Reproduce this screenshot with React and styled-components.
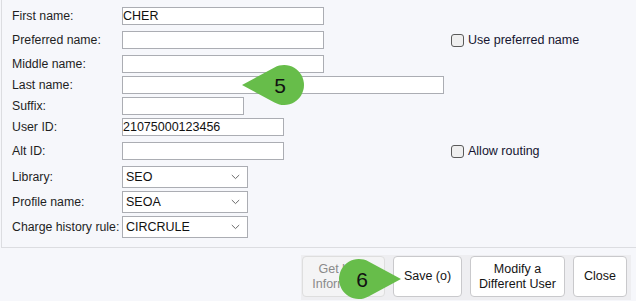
import React from "react";
import styled, { createGlobalStyle } from "styled-components";

const Global = createGlobalStyle`
  html, body { margin: 0; padding: 0; }
  body {
    background: #f6f7fb;
    font-family: "Liberation Sans", Arial, sans-serif;
    color: #1c1c1c;
  }
`;

const Page = styled.div`
  position: relative;
  width: 636px;
  height: 301px;
  overflow: hidden;
  background: #f6f7fb;
`;

const Panel = styled.div`
  margin-left: 1px;
  border-left: 1px solid #dcdde1;
  border-bottom: 1px solid #dcdde1;
  padding: 7px 0 9px 10px;
`;

const Row = styled.div`
  display: grid;
  grid-template-columns: 110px 329px auto;
  align-items: center;
  margin-top: ${(p) => p.$gap || 0}px;
`;

const Label = styled.label`
  font-size: 12.3px;
  color: #1f1f1f;
  white-space: nowrap;
`;

const TextBox = styled.div`
  box-sizing: border-box;
  width: ${(p) => p.$w}px;
  height: 18px;
  border: 1px solid #abadb3;
  background: #fff;
  font-size: 12.5px;
  line-height: 16px;
  padding-left: 0px;
  color: #111;
`;

const SelectBox = styled.div`
  box-sizing: border-box;
  width: 126px;
  height: 22px;
  border: 1px solid #abadb3;
  background: #fff;
  font-size: 12.5px;
  color: #111;
  display: flex;
  align-items: center;
  justify-content: space-between;
  padding: 0 7px 0 3px;
`;

const Check = styled.div`
  display: flex;
  align-items: center;
  gap: 4px;
  font-size: 12.5px;
  color: #151530;
  white-space: nowrap;
`;

const Box = styled.span`
  box-sizing: border-box;
  width: 13px;
  height: 13px;
  border: 1px solid #5a5a5a;
  border-radius: 3px;
  background: #efefef;
`;

const Footer = styled.div`
  display: flex;
  justify-content: flex-end;
  margin-top: 7px;
  padding-right: 5px;
`;

const ButtonBand = styled.div`
  display: flex;
  gap: 8px;
  padding: 1px 4px 3px 1px;
  background: #eeeef1;
`;

const Button = styled.div`
  box-sizing: border-box;
  width: ${(p) => p.$w}px;
  height: 41px;
  border: 1px solid ${(p) => (p.$disabled ? "#dedede" : "#c9c9cc")};
  border-radius: 4px;
  background: ${(p) => (p.$disabled ? "#f4f4f5" : "#ffffff")};
  color: ${(p) => (p.$disabled ? "#8a8a8a" : "#141414")};
  font-size: 12.5px;
  line-height: 15px;
  display: flex;
  align-items: center;
  justify-content: center;
  text-align: center;
`;

const CalloutSvg = styled.svg`
  position: absolute;
  left: ${(p) => p.$x}px;
  top: ${(p) => p.$y}px;
  overflow: visible;
`;

const Chevron = () => (
  <svg width="9" height="6" viewBox="0 0 9 6">
    <path d="M0.8 1 L4.5 4.6 L8.2 1" fill="none" stroke="#6b6b6b" strokeWidth="1" />
  </svg>
);

const GREEN = "#67bd4a";

function Callout({ x, y, dir, label, textDx }) {
  // teardrop: circle radius 20, tip 42 from center
  const r = 20;
  const d = 42;
  const cosA = r / d;
  const sinA = Math.sqrt(1 - cosA * cosA);
  const px = r * cosA;
  const py = r * sinA;
  let path;
  let w = d + r;
  let cx;
  if (dir === "left") {
    cx = d;
    path = `M0 ${r} L${cx - px} ${r - py} A${r} ${r} 0 1 1 ${cx - px} ${r + py} Z`;
  } else {
    cx = r;
    path = `M${w} ${r} L${cx + px} ${r - py} A${r} ${r} 0 1 0 ${cx + px} ${r + py} Z`;
  }
  return (
    <CalloutSvg $x={x} $y={y} width={w} height={2 * r} viewBox={`0 0 ${w} ${2 * r}`}>
      <path d={path} fill={GREEN} />
      <text
        x={cx + textDx}
        y={r + 7.5}
        textAnchor="middle"
        fontFamily="Liberation Sans, Arial, sans-serif"
        fontSize="21"
        fill="#111"
      >
        {label}
      </text>
    </CalloutSvg>
  );
}

export default function App() {
  return (
    <Page>
      <Global />
      <Panel>
        <Row>
          <Label>First name:</Label>
          <TextBox $w={202}>CHER</TextBox>
        </Row>
        <Row $gap={6}>
          <Label>Preferred name:</Label>
          <TextBox $w={202} />
          <Check>
            <Box />
            Use preferred name
          </Check>
        </Row>
        <Row $gap={6}>
          <Label>Middle name:</Label>
          <TextBox $w={202} />
        </Row>
        <Row $gap={3}>
          <Label>Last name:</Label>
          <TextBox $w={322} />
        </Row>
        <Row $gap={3}>
          <Label>Suffix:</Label>
          <TextBox $w={122} />
        </Row>
        <Row $gap={3}>
          <Label>User ID:</Label>
          <TextBox $w={162}>21075000123456</TextBox>
        </Row>
        <Row $gap={6}>
          <Label>Alt ID:</Label>
          <TextBox $w={162} />
          <Check>
            <Box />
            Allow routing
          </Check>
        </Row>
        <Row $gap={6}>
          <Label>Library:</Label>
          <SelectBox>
            SEO
            <Chevron />
          </SelectBox>
        </Row>
        <Row $gap={3}>
          <Label>Profile name:</Label>
          <SelectBox>
            SEOA
            <Chevron />
          </SelectBox>
        </Row>
        <Row $gap={3}>
          <Label>Charge history rule:</Label>
          <SelectBox>
            CIRCRULE
            <Chevron />
          </SelectBox>
        </Row>
      </Panel>
      <Footer>
        <ButtonBand>
          <Button $w={83} $disabled>
            Get User
            <br />
            Information
          </Button>
          <Button $w={69}>Save (o)</Button>
          <Button $w={95}>
            Modify a
            <br />
            Different User
          </Button>
          <Button $w={54}>Close</Button>
        </ButtonBand>
      </Footer>
      <Callout x={242} y={65} dir="left" label="5" textDx={-4} />
      <Callout x={339} y={259} dir="right" label="6" textDx={3} />
    </Page>
  );
}
